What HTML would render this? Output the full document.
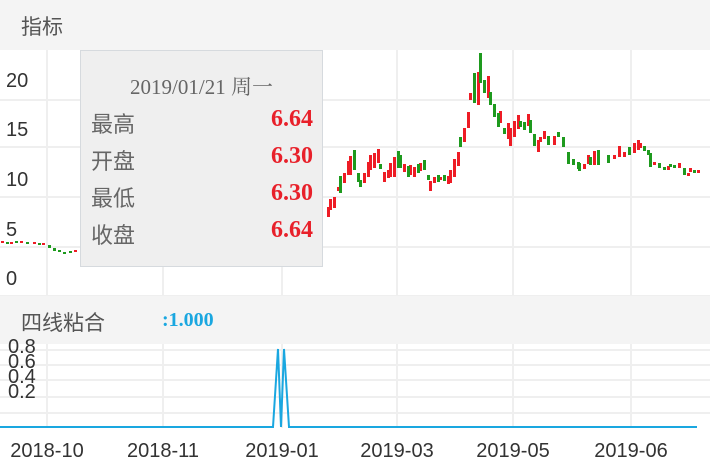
<!DOCTYPE html>
<html><head><meta charset="utf-8"><style>
body{margin:0;width:710px;height:472px;background:#fff;overflow:hidden;position:relative;font-family:"Liberation Sans","Noto Sans CJK SC",sans-serif}
.hdr{position:absolute;left:0;width:710px;background:#f4f4f4;color:#555;font-size:21px}
.tip{position:absolute;left:80px;top:50px;width:241px;height:215px;background:#efefef;border:1px solid #d6dade;font-family:"Liberation Serif","Noto Serif CJK SC",serif;color:#666}
.row{position:absolute;left:10px;width:222px;font-size:22px;font-family:"Liberation Sans","Noto Sans CJK SC",sans-serif;color:#666}
.row b{position:absolute;right:0;top:-1px;color:#e8202a;font-family:"Liberation Serif",serif;font-size:24px}
.yl{position:absolute;left:6px;font-size:20px;color:#333}
.xl{position:absolute;top:440px;font-size:20px;color:#333;width:100px;text-align:center}
</style></head><body>
<div class="hdr" style="top:0;height:50px"><span style="position:absolute;left:21px;top:11px">指标</span></div>
<svg width="710" height="472" style="position:absolute;left:0;top:0">
<g stroke="#efefef" stroke-width="2">
<line x1="0" y1="100" x2="710" y2="100"/><line x1="0" y1="147" x2="710" y2="147"/><line x1="0" y1="197" x2="710" y2="197"/><line x1="0" y1="247" x2="710" y2="247"/><line x1="0" y1="296" x2="710" y2="296"/>
<line x1="47" y1="50" x2="47" y2="296"/><line x1="163" y1="50" x2="163" y2="296"/><line x1="282" y1="50" x2="282" y2="296"/><line x1="397" y1="50" x2="397" y2="296"/><line x1="513" y1="50" x2="513" y2="296"/><line x1="631" y1="50" x2="631" y2="296"/>
<line x1="0" y1="350" x2="710" y2="350"/><line x1="0" y1="365" x2="710" y2="365"/><line x1="0" y1="380" x2="710" y2="380"/><line x1="0" y1="397" x2="710" y2="397"/><line x1="0" y1="413" x2="710" y2="413"/>
<line x1="47" y1="344" x2="47" y2="428"/><line x1="163" y1="344" x2="163" y2="428"/><line x1="282" y1="344" x2="282" y2="428"/><line x1="397" y1="344" x2="397" y2="428"/><line x1="513" y1="344" x2="513" y2="428"/><line x1="631" y1="344" x2="631" y2="428"/>
</g>
<g fill="#ee1c25">
<rect x="1" y="241" width="3" height="2"/><rect x="10" y="242" width="3" height="2"/><rect x="20" y="241" width="3" height="2"/><rect x="33" y="242" width="3" height="2"/><rect x="42" y="243" width="3" height="2"/><rect x="74" y="250" width="3" height="2"/>
<rect x="327" y="207" width="3" height="10"/><rect x="329" y="199" width="3" height="11"/><rect x="333" y="197" width="3" height="11"/><rect x="337" y="187" width="3" height="4"/><rect x="343" y="173" width="3" height="10"/><rect x="347" y="161" width="3" height="14"/><rect x="349" y="156" width="3" height="19"/><rect x="363" y="173" width="3" height="10"/><rect x="367" y="162" width="3" height="15"/><rect x="369" y="155" width="3" height="15"/><rect x="373" y="153" width="3" height="15"/><rect x="377" y="149" width="3" height="14"/><rect x="383" y="172" width="3" height="10"/><rect x="387" y="170" width="3" height="8"/><rect x="389" y="163" width="3" height="14"/><rect x="393" y="157" width="3" height="20"/><rect x="403" y="164" width="3" height="8"/><rect x="409" y="165" width="3" height="10"/><rect x="413" y="167" width="3" height="10"/><rect x="419" y="163" width="3" height="8"/><rect x="429" y="181" width="3" height="10"/><rect x="433" y="177" width="3" height="6"/><rect x="439" y="177" width="3" height="3"/><rect x="447" y="176" width="3" height="8"/><rect x="449" y="170" width="3" height="13"/><rect x="453" y="159" width="3" height="18"/><rect x="457" y="152" width="3" height="14"/><rect x="463" y="128" width="3" height="14"/><rect x="467" y="112" width="3" height="16"/>
<rect x="469" y="93" width="3" height="7"/><rect x="477" y="72" width="3" height="33"/><rect x="487" y="76" width="3" height="22"/><rect x="499" y="111" width="3" height="12"/><rect x="507" y="123" width="3" height="16"/><rect x="509" y="128" width="3" height="18"/><rect x="513" y="121" width="3" height="16"/><rect x="517" y="115" width="3" height="14"/><rect x="527" y="114" width="3" height="12"/>
<rect x="537" y="140" width="3" height="12"/><rect x="539" y="137" width="3" height="5"/><rect x="543" y="131" width="3" height="8"/><rect x="553" y="136" width="3" height="9"/><rect x="583" y="164" width="3" height="5"/><rect x="587" y="155" width="3" height="9"/><rect x="593" y="151" width="3" height="14"/>
<rect x="613" y="155" width="3" height="4"/><rect x="618" y="146" width="3" height="11"/><rect x="623" y="152" width="3" height="5"/><rect x="633" y="143" width="3" height="10"/><rect x="637" y="140" width="3" height="10"/><rect x="639" y="143" width="3" height="5"/><rect x="653" y="162" width="3" height="3"/><rect x="667" y="166" width="3" height="4"/><rect x="678" y="163" width="3" height="5"/><rect x="687" y="173" width="3" height="3"/><rect x="689" y="168" width="3" height="4"/><rect x="697" y="170" width="3" height="3"/>
</g>
<g fill="#1e9a1e">
<rect x="6" y="242" width="3" height="2"/><rect x="15" y="241" width="3" height="2"/><rect x="26" y="242" width="3" height="2"/><rect x="38" y="243" width="3" height="2"/><rect x="48" y="245" width="3" height="3"/><rect x="53" y="248" width="3" height="3"/><rect x="58" y="250" width="3" height="2"/><rect x="63" y="252" width="3" height="2"/><rect x="69" y="251" width="3" height="2"/>
<rect x="339" y="176" width="3" height="17"/><rect x="353" y="150" width="3" height="20"/><rect x="357" y="173" width="3" height="9"/><rect x="359" y="180" width="3" height="7"/><rect x="379" y="164" width="3" height="5"/><rect x="397" y="151" width="3" height="17"/><rect x="399" y="155" width="3" height="13"/><rect x="407" y="166" width="3" height="11"/><rect x="417" y="164" width="3" height="9"/><rect x="423" y="160" width="3" height="10"/><rect x="427" y="175" width="3" height="5"/><rect x="437" y="175" width="3" height="7"/><rect x="443" y="175" width="3" height="6"/><rect x="459" y="137" width="3" height="10"/>
<rect x="473" y="73" width="3" height="30"/><rect x="479" y="53" width="3" height="30"/><rect x="483" y="80" width="3" height="13"/><rect x="489" y="92" width="3" height="13"/><rect x="493" y="104" width="3" height="13"/><rect x="497" y="113" width="3" height="14"/><rect x="503" y="128" width="3" height="6"/><rect x="519" y="121" width="3" height="6"/><rect x="523" y="122" width="3" height="8"/><rect x="529" y="120" width="3" height="13"/>
<rect x="533" y="134" width="3" height="12"/><rect x="547" y="136" width="3" height="9"/><rect x="557" y="132" width="3" height="5"/><rect x="562" y="137" width="3" height="10"/><rect x="567" y="152" width="3" height="12"/><rect x="572" y="159" width="3" height="6"/><rect x="577" y="162" width="3" height="7"/><rect x="578" y="163" width="3" height="8"/><rect x="589" y="157" width="3" height="8"/><rect x="597" y="150" width="3" height="15"/><rect x="607" y="155" width="3" height="8"/><rect x="628" y="147" width="3" height="8"/><rect x="643" y="146" width="3" height="5"/><rect x="647" y="150" width="3" height="5"/><rect x="649" y="153" width="3" height="14"/><rect x="658" y="163" width="3" height="5"/><rect x="663" y="167" width="3" height="3"/><rect x="669" y="164" width="3" height="3"/><rect x="673" y="165" width="3" height="3"/><rect x="683" y="168" width="3" height="7"/><rect x="693" y="170" width="3" height="3"/>
</g>
<polyline points="0,427 273,427 278,349 281,427 284,349 289,427 697,427" fill="none" stroke="#1aa7e0" stroke-width="2"/>
</svg>
<div class="yl" style="top:70px">20</div><div class="yl" style="top:119px">15</div><div class="yl" style="top:169px">10</div><div class="yl" style="top:219px">5</div><div class="yl" style="top:268px">0</div>
<div class="tip">
<div style="position:absolute;left:0;width:241px;text-align:center;top:20px;font-size:21px">2019/01/21 周一</div>
<div class="row" style="top:56px">最高<b>6.64</b></div>
<div class="row" style="top:93px">开盘<b>6.30</b></div>
<div class="row" style="top:130px">最低<b>6.30</b></div>
<div class="row" style="top:167px">收盘<b>6.64</b></div>
</div>
<div class="hdr" style="top:296px;height:48px"><span style="position:absolute;left:21px;top:11px">四线粘合</span><span style="position:absolute;left:162px;top:13px;color:#1aa7e0;font-weight:bold;font-family:'Liberation Serif',serif;font-size:20px">:1.000</span></div>
<div style="position:absolute;left:8px;top:340px;font-size:20px;line-height:15px;color:#333">0.8<br>0.6<br>0.4<br>0.2</div>
<div class="xl" style="left:-3px">2018-10</div><div class="xl" style="left:113px">2018-11</div><div class="xl" style="left:232px">2019-01</div><div class="xl" style="left:347px">2019-03</div><div class="xl" style="left:463px">2019-05</div><div class="xl" style="left:581px">2019-06</div>
</body></html>
